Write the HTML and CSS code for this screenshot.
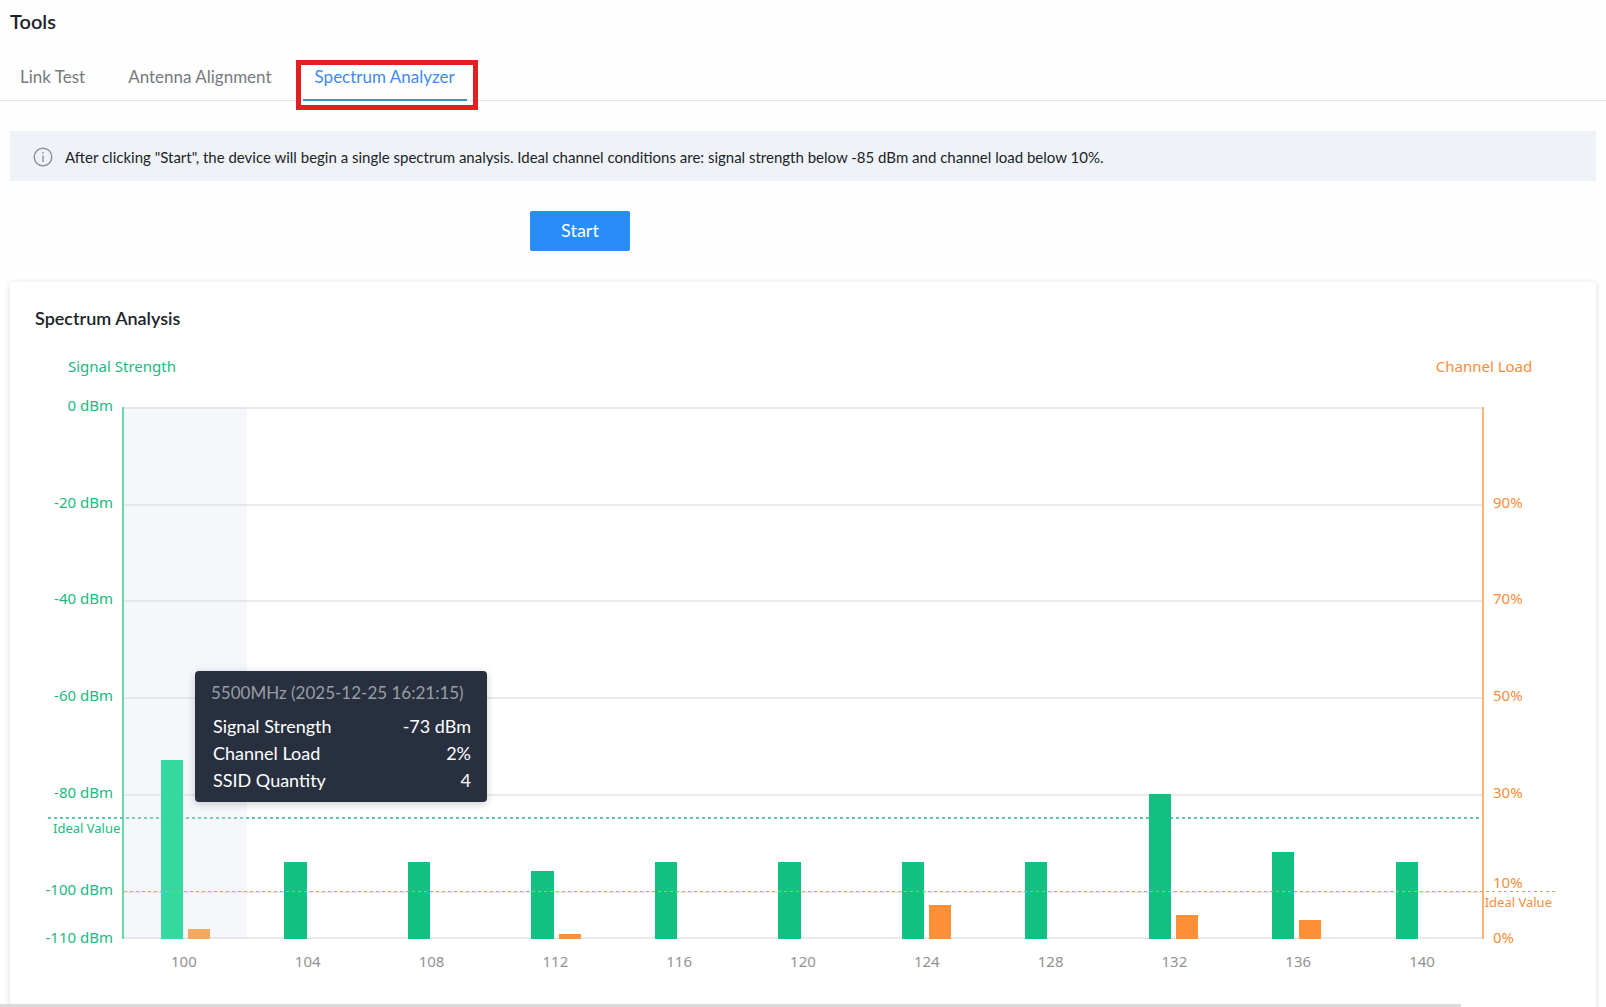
FILE: index.html
```html
<!DOCTYPE html>
<html lang="en">
<head>
  <meta charset="UTF-8" />
  <meta name="viewport" content="width=device-width, initial-scale=1.0"/>
  <title>Tools - Spectrum Analyzer</title>
  <link rel="stylesheet" href="styles.css">
</head>
<body>

  <header>
    <h1>Tools</h1>
  </header>

  <nav class="tabs">
    <a class="tab" href="#link-test">Link Test</a>
    <a class="tab" href="#antenna-alignment">Antenna Alignment</a>
    <a class="tab active" href="#spectrum-analyzer">Spectrum Analyzer</a>
  </nav>

  <main>
    <div class="notice">
      <svg class="notice-icon" width="20" height="20" viewBox="0 0 20 20" fill="none" stroke="#8d9199" stroke-width="1.4">
        <circle cx="10" cy="10" r="8.8"/>
        <path d="M10 8.5V15"/>
        <path d="M10 5V6.8"/>
      </svg>
      <p>After clicking "Start", the device will begin a single spectrum analysis. Ideal channel conditions are: signal strength below -85 dBm and channel load below 10%.</p>
    </div>

    <div class="actions">
      <button type="button" class="start-btn">Start</button>
    </div>

    <section class="card">
      <h2>Spectrum Analysis</h2>

      <div class="axis-names">
        <span class="green">Signal Strength</span>
        <span class="orange">Channel Load</span>
      </div>

      <div class="chart">
        <!-- Signal axis -->
        <div class="axis axis-left">
          <div class="tick"><span>0 dBm</span></div>
          <div class="tick"><span>-20 dBm</span></div>
          <div class="tick"><span>-40 dBm</span></div>
          <div class="tick"><span>-60 dBm</span></div>
          <div class="tick"><span>-80 dBm</span></div>
          <div class="tick half"><span>-100 dBm</span></div>
          <div class="tick last"><span>-110 dBm</span></div>
        </div>

        <div class="plot">
          <div class="grid-lines">
            <div class="row"></div>
            <div class="row"></div>
            <div class="row"></div>
            <div class="row"></div>
            <div class="row"></div>
            <div class="row half"></div>
          </div>

          <div class="mark mark-signal">Ideal Value</div>

          <div class="groups" id="groups"></div>

          <div class="mark mark-load">Ideal Value</div>

          <div class="tooltip">
            <p class="tooltip-title">5500MHz (2025-12-25 16:21:15)</p>
            <dl>
              <div><dt>Signal Strength</dt><dd>-73 dBm</dd></div>
              <div><dt>Channel Load</dt><dd>2%</dd></div>
              <div><dt>SSID Quantity</dt><dd>4</dd></div>
            </dl>
          </div>
        </div>

        <!-- Load axis -->
        <div class="axis axis-right">
          <div class="tick"></div>
          <div class="tick"><span>90%</span></div>
          <div class="tick"><span>70%</span></div>
          <div class="tick"><span>50%</span></div>
          <div class="tick"><span>30%</span></div>
          <div class="tick half raised"><span>10%</span></div>
          <div class="tick last"><span>0%</span></div>
        </div>

        <div class="channels" id="channels"></div>
      </div>
    </section>
  </main>

  <div class="scrollbar"></div>

  <script>
    // channel, signal (dBm), load (%)
    const data = [
      [100, -73, 2],
      [104, -94, 0],
      [108, -94, 0],
      [112, -96, 1],
      [116, -94, 0],
      [120, -94, 0],
      [124, -94, 7],
      [128, -94, 0],
      [132, -80, 5],
      [136, -92, 4],
      [140, -94, 0]
    ];
    const groups = document.getElementById('groups');
    const channels = document.getElementById('channels');

    data.forEach(([channel, signal, load], i) => {
      const group = document.createElement('div');
      group.className = i === 0 ? 'group hovered' : 'group';
      group.innerHTML = `
        <div class="bar signal" style="height: ${(110 + signal) / 110 * 100}%"></div>
        <div class="bar load" style="height: ${load / 110 * 100}%"></div>
      `;
      groups.appendChild(group);

      const label = document.createElement('span');
      label.textContent = channel;
      channels.appendChild(label);
    });
  </script>

</body>
</html>
```
FILE: styles.css
```css
:root {
  --green: #12c081;
  --green-text: #21b983;
  --orange: #ff9037;
  --orange-text: #f98d37;
  --line: #e8eaec;
}

* {
  box-sizing: border-box;
}

body {
  margin: 0;
  min-height: 100vh;
  display: flex;
  flex-direction: column;
  font-family: Lato, "Liberation Sans", sans-serif;
  color: #202329;
  background: #fefefe;
}

h1,
h2,
p,
dl,
dd {
  margin: 0;
}

header {
  padding: 9px 10px 0;
}

h1 {
  font-size: 20px;
  line-height: 24px;
  font-weight: 600;
}

/* Tabs */
.tabs {
  display: flex;
  gap: 19px;
  margin-top: 22px;
  padding: 0 8px;
  border-bottom: 1px solid #e6e7e9;
}

.tab {
  position: relative;
  height: 46px;
  padding: 0 12px;
  margin-bottom: -1px;
  font-size: 17px;
  line-height: 44px;
  color: #76797e;
  text-decoration: none;
}

.tab.active {
  color: #3f8aee;
  border-bottom: 2px solid #3a8fc8;
}

/* red highlight around the open tab */
.tab.active::after {
  content: "";
  position: absolute;
  top: 5px;
  right: -11px;
  bottom: -11px;
  left: -7px;
  border: 5px solid #e32020;
}

main {
  flex: 1;
  display: flex;
  flex-direction: column;
  padding: 30px 10px 0;
}

.notice {
  display: flex;
  align-items: center;
  gap: 12px;
  padding: 16px 23px 14px;
  background: #eff3f8;
}

.notice-icon {
  flex: none;
}

.notice p {
  font-size: 15px;
  line-height: 20px;
}

.actions {
  padding: 30px 0 31px calc(33vw - 10px);
}

.start-btn {
  display: block;
  width: 100px;
  height: 40px;
  padding: 0 0 2px;
  border: none;
  border-radius: 2px;
  background: #288df8;
  color: #fff;
  font-family: inherit;
  font-size: 18px;
  cursor: pointer;
}

/* Chart card */
.card {
  flex: 1;
  padding-top: 24px;
  border-radius: 4px 4px 0 0;
  background: #fff;
  box-shadow: 0 1px 6px rgba(0, 0, 0, 0.14);
}

h2 {
  padding: 0 25px;
  font-size: 18px;
  line-height: 24px;
  font-weight: 600;
}

.axis-names {
  display: flex;
  justify-content: space-between;
  margin-top: 24px;
  padding: 0 51px;
  font: 15px/24px "Noto Sans", sans-serif;
}

.axis-names span {
  width: 122px;
  text-align: center;
}

.green {
  color: var(--green-text);
}

.orange {
  color: var(--orange-text);
}

.chart {
  display: grid;
  grid-template-columns: 112px 1fr 112px;
  grid-template-rows: 532px auto;
  margin-top: 29px;
  font: 15px/20px "Noto Sans", sans-serif;
}

.axis,
.grid-lines {
  display: flex;
  flex-direction: column;
}

.axis {
  margin: -12px 0 12px;
}

.axis-left {
  padding-right: 9px;
  text-align: right;
  color: var(--green-text);
}

.axis-right {
  padding-left: 9px;
  color: var(--orange-text);
}

.tick,
.row {
  flex: 20 1 0;
  min-height: 0;
}

.tick.half,
.row.half {
  flex-grow: 10;
}

.tick.last {
  flex: none;
  height: 0;
}

.tick span {
  display: block;
}

/* leaves room for the ideal value line below */
.tick.raised span {
  margin-top: -7px;
}

.plot {
  position: relative;
  border-left: 2px solid #6bd5ab;
  border-right: 2px solid #ffb273;
}

.grid-lines {
  height: 100%;
  box-shadow: inset 0 -2px var(--line);
}

.row {
  box-shadow: inset 0 2px var(--line);
}

.groups {
  position: absolute;
  inset: 0;
  display: flex;
}

.group {
  flex: 1;
  display: flex;
  align-items: flex-end;
  justify-content: center;
  gap: 4%;
}

.group.hovered {
  background: rgba(220, 226, 240, 0.26);
}

.bar {
  width: 18%;
}

.bar.signal {
  background: var(--green);
}

.bar.load {
  background: var(--orange);
}

.hovered .signal {
  background: #36d89f;
}

.hovered .load {
  background: #f5a860;
}

/* Ideal value lines */
.mark {
  position: absolute;
  padding: 0 5px;
  font-size: 13px;
  line-height: 22px;
  background-size: 100% 2px;
  background-repeat: no-repeat;
}

.mark-signal {
  top: 77%;
  left: -76px;
  right: 0;
  color: var(--green-text);
  background-image: repeating-linear-gradient(90deg, #5cc9a0 0 3px, transparent 3px 6px);
}

.mark-load {
  top: 91%;
  left: 0;
  right: -75px;
  text-align: right;
  color: var(--orange-text);
  background-size: 100% 1px;
  background-image: repeating-linear-gradient(90deg, #f3a055 0 3px, transparent 3px 6px);
}

.tooltip {
  position: absolute;
  top: 264px;
  left: 71px;
  width: 292px;
  padding: 8px 16px;
  border-radius: 4px;
  background: #283040;
  box-shadow: 0 2px 8px rgba(0, 0, 0, 0.2);
  color: #fff;
  font-family: Lato, sans-serif;
  font-size: 18px;
  line-height: 27px;
  white-space: nowrap;
}

.tooltip-title {
  font-size: 17px;
  color: #9a9da4;
}

.tooltip dl {
  padding: 7px 0 0 2px;
}

.tooltip dl div {
  display: flex;
  justify-content: space-between;
}

.channels {
  grid-column: 2;
  display: flex;
  padding: 12px 0 34px;
  color: #929292;
}

.channels span {
  flex: 1;
  text-align: center;
}

/* page's horizontal scrollbar */
.scrollbar {
  position: fixed;
  left: 0;
  bottom: 0;
  width: 91%;
  height: 3px;
  background: #dbdbdb;
}
```
